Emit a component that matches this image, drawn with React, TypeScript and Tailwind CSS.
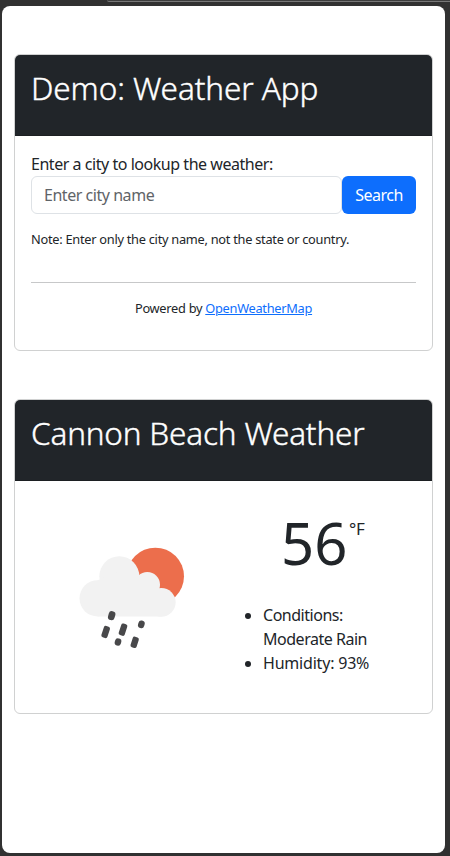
import React from "react";

function CardHeader({ children, className }: { children: React.ReactNode; className: string }) {
  return (
    <div className="h-[81px] rounded-t-[5px] border-b border-[#1c1f22] bg-[#212529] px-4 pt-2">
      <h2 className={`whitespace-nowrap text-[31.500px] font-light leading-[49px] text-white [-webkit-text-stroke:0.4px_white] ${className}`}>{children}</h2>
    </div>
  );
}

function RainIcon() {
  return (
    <svg className="h-[125px] w-[140px] shrink-0" viewBox="0 0 420 375">
      <circle cx="271" cy="124" r="86" fill="#ec6e4c" />
      <g fill="#f2f2f2">
        <circle cx="98" cy="190" r="54.5" />
        <circle cx="163" cy="124" r="60" />
        <circle cx="247" cy="149" r="38" />
        <circle cx="289" cy="202" r="43" />
        <path d="M98 136L163 110L247 140L289 180V244.500H98Z" />
      </g>
      <g fill="#48484a">
        <rect x="-10" y="-13.500" width="20" height="27" rx="9" transform="translate(140 242) rotate(16)" />
        <rect x="-9.500" y="-18" width="19" height="36" rx="6" transform="translate(122 291) rotate(18)" />
        <rect x="-9.500" y="-18" width="19" height="36" rx="6" transform="translate(174 284) rotate(18)" />
        <rect x="-9.500" y="-11.500" width="19" height="23" rx="9" transform="translate(229 268) rotate(16)" />
        <rect x="-9.500" y="-11" width="19" height="22" rx="9" transform="translate(159 321) rotate(16)" />
        <rect x="-9.500" y="-16.500" width="19" height="33" rx="6" transform="translate(209 322) rotate(18)" />
      </g>
    </svg>
  );
}

export default function App() {
  return (
    <div className="h-[856px] w-[450px] overflow-hidden bg-[#313131] pl-[2px] font-['Noto_Sans',sans-serif] text-[#212529]">
      <div className="flex h-[6px] justify-end">
        <div className="h-[2px] w-[343px] rounded-bl-[4px] border-b border-[#777] bg-[#3d3d3d]" />
      </div>
      <main className="h-[847px] w-[443px] rounded-[8px] bg-white px-3 pt-[48px]">
        <section className="h-[297px] rounded-[6px] border border-[#d0d1d1]">
          <CardHeader className="tracking-[-0.080px]">Demo: Weather App</CardHeader>
          <div className="px-4 pt-4">
            <label htmlFor="city" className="block whitespace-nowrap text-[16px] leading-6 tracking-[-0.460px]">
              Enter a city to lookup the weather:
            </label>
            <div className="flex h-[38px]">
              <input
                id="city"
                placeholder="Enter city name"
                className="min-w-0 flex-1 rounded-[6px] border border-[#dee2e6] px-3 text-[16px] tracking-[-0.460px] placeholder:text-[#5f6468]"
              />
              <button className="w-[74px] rounded-[6px] bg-[#0d6efd] text-center text-[16px] tracking-[-0.500px] text-white">
                Search
              </button>
            </div>
            <p className="mt-[15px] whitespace-nowrap text-[12.800px] leading-[20px] tracking-[-0.270px]">
              Note: Enter only the city name, not the state or country.
            </p>
            <hr className="mt-[33px] border-[#c7c8c9]" />
            <p className="mt-[15px] whitespace-nowrap text-center text-[12.800px] leading-[20px] tracking-[-0.280px]">
              Powered by <a href="#" className="text-[#0d6efd] underline">OpenWeatherMap</a>
            </p>
          </div>
        </section>
        <section className="mt-[48px] h-[315px] rounded-[6px] border border-[#d0d1d1]">
          <CardHeader className="tracking-[-0.180px]">Cannon Beach Weather</CardHeader>
          <div className="flex">
            <div className="w-[209px] pl-[50px] pt-[54px]">
              <RainIcon />
            </div>
            <div className="flex-1">
              <div className="flex pl-[57px] pt-[28px]">
                <span className="w-[68px] text-[58px] font-normal leading-[68px]">56</span>
                <span className="pt-[8px] text-[17px] leading-6 tracking-[-0.300px]">°F</span>
              </div>
              <ul className="mt-[26px] list-disc pl-[39px] text-[16px] leading-6 tracking-[-0.480px]">
                <li>Conditions:<br />Moderate Rain</li>
                <li className="tracking-[-0.200px]">Humidity: 93%</li>
              </ul>
            </div>
          </div>
        </section>
      </main>
    </div>
  );
}
